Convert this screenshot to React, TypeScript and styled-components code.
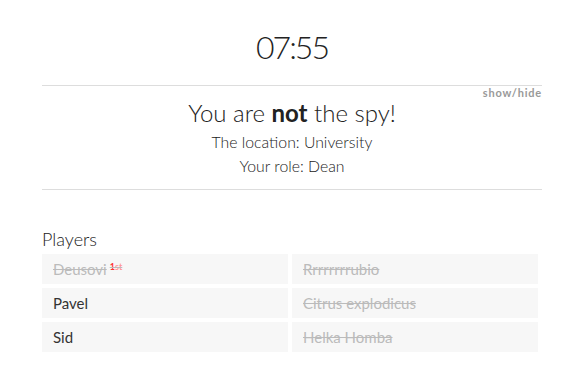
import React from "react";
import styled, { createGlobalStyle } from "styled-components";

const Global = createGlobalStyle`
  html, body { margin: 0; padding: 0; background: #fff; }
  body { font-family: "Lato", "Open Sans", sans-serif; color: #222; }
`;

const Page = styled.div`
  width: 500px;
  margin-left: 42px;
  display: flex;
  flex-direction: column;
`;

const Timer = styled.div`
  text-align: center;
  font-size: 32px;
  font-weight: 300;
  letter-spacing: -2px;
  line-height: 36px;
  padding-top: 29px;
  height: 56px;
  color: #222;
`;

const Rule = styled.div`
  height: 1px;
  background: #ddd;
`;

const ToggleRow = styled.div`
  display: flex;
  justify-content: flex-end;
  height: 12px;
`;

const Toggle = styled.span`
  font-size: 11px;
  font-weight: 700;
  color: #999;
  letter-spacing: 0.8px;
  line-height: 12px;
  padding-top: 1px;
`;

const Info = styled.div`
  display: flex;
  flex-direction: column;
  align-items: center;
  padding-bottom: 11px;
`;

const Headline = styled.div`
  font-size: 24px;
  font-weight: 300;
  line-height: 30px;
  margin-bottom: 2px;
  b { font-weight: 700; }
`;

const InfoLine = styled.div`
  font-size: 15.8px;
  font-weight: 300;
  line-height: 24px;
`;

const PlayersTitle = styled.div`
  font-size: 18px;
  font-weight: 300;
  line-height: 22px;
  margin-top: 38px;
  margin-bottom: 4px;
`;

const Grid = styled.div`
  width: 496px;
  display: grid;
  grid-template-columns: 1fr 1fr;
  gap: 4px;
`;

const Cell = styled.div<{ $out?: boolean }>`
  height: 30px;
  background: #f7f7f7;
  padding-left: 11px;
  display: flex;
  align-items: center;
  font-size: 15px;
  font-weight: 400;
  color: ${(p) => (p.$out ? "#bbb" : "#333")};
  text-decoration: ${(p) => (p.$out ? "line-through" : "none")};
`;

const Badge = styled.sup`
  font-size: 9px;
  font-weight: 700;
  color: #f33;
  margin-left: 3px;
  position: relative;
  top: -3px;
  span { color: #f99; }
`;

const players: { name: string; out?: boolean; first?: boolean }[] = [
  { name: "Deusovi", out: true, first: true },
  { name: "Rrrrrrrrubio", out: true },
  { name: "Pavel" },
  { name: "Citrus explodicus", out: true },
  { name: "Sid" },
  { name: "Helka Homba", out: true },
];

export default function App() {
  return (
    <>
      <Global />
      <Page>
        <Timer>07:55</Timer>
        <Rule />
        <ToggleRow>
          <Toggle>show/hide</Toggle>
        </ToggleRow>
        <Info>
          <Headline>
            You are <b>not</b> the spy!
          </Headline>
          <InfoLine>The location: University</InfoLine>
          <InfoLine>Your role: Dean</InfoLine>
        </Info>
        <Rule />
        <PlayersTitle>Players</PlayersTitle>
        <Grid>
          {players.map((p) => (
            <Cell key={p.name} $out={p.out}>
              {p.name}
              {p.first && (
                <Badge>
                  1<span>st</span>
                </Badge>
              )}
            </Cell>
          ))}
        </Grid>
      </Page>
    </>
  );
}
